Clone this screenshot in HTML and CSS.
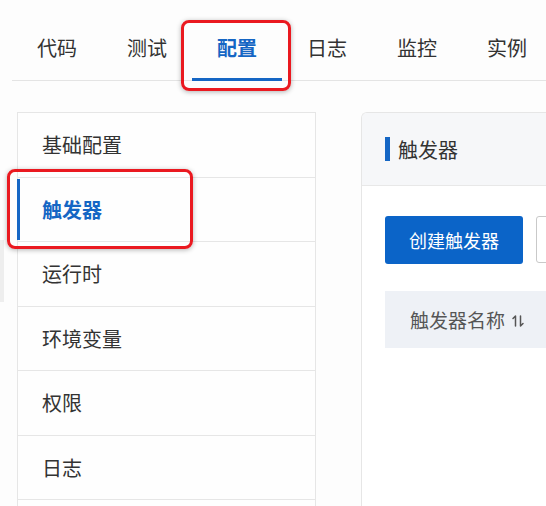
FILE: index.html
```html
<!DOCTYPE html>
<html lang="zh-CN">
<head>
<meta charset="utf-8">
<link rel="stylesheet" href="styles.css">
</head>
<body>
<div class="edge-tab"></div>
<nav class="tabs">
  <div class="tab">代码</div>
  <div class="tab">测试</div>
  <div class="tab active">配置<span class="mark mark-tab"></span></div>
  <div class="tab">日志</div>
  <div class="tab">监控</div>
  <div class="tab">实例</div>
</nav>
<main class="main">
  <aside class="sidebar">
    <div class="item">基础配置</div>
    <div class="item active">触发器<span class="mark mark-item"></span></div>
    <div class="item">运行时</div>
    <div class="item">环境变量</div>
    <div class="item">权限</div>
    <div class="item">日志</div>
  </aside>
  <section class="panel">
    <header class="panel-head"><span class="bar"></span><span class="title">触发器</span></header>
    <div class="panel-body">
      <div class="actions">
        <button class="btn-primary">创建触发器</button>
        <div class="btn-outline"></div>
      </div>
      <div class="thead">
        <span>触发器名称</span>
        <svg class="sort" width="14" height="12" viewBox="0 0 14 12" fill="none" stroke="#555" stroke-width="1.5" stroke-linecap="round" stroke-linejoin="round">
          <path d="M4.5 11V1L2 3.5"/>
          <path d="M9.5 1v10l2.5-2.5"/>
        </svg>
      </div>
    </div>
  </section>
</main>
</body>
</html>
```
FILE: styles.css
```css
* { box-sizing: border-box; }
html, body { margin: 0; padding: 0; }
body {
  width: 546px;
  height: 506px;
  overflow: hidden;
  background: #fdfdfd;
  font-family: "Noto Sans CJK SC", "Noto Sans", sans-serif;
  color: #333;
  position: relative;
}
.edge-tab {
  position: absolute;
  left: 0;
  top: 240px;
  width: 4px;
  height: 62px;
  background: #eeeeee;
}
.tabs {
  display: flex;
  margin-left: 12px;
  height: 81px;
  border-bottom: 1px solid #e4e4e4;
}
.tab {
  position: relative;
  width: 90px;
  height: 81px;
  padding-top: 34px;
  padding-left: 25px;
  line-height: 28px;
  font-size: 20px;
  color: #333;
  flex-shrink: 0;
}
.tab:last-child { width: 84px; }
.tab.active {
  color: #1566c4;
  font-weight: 700;
  box-shadow: inset 0 -3px 0 #1566c4;
}
.mark {
  position: absolute;
  border: 3px solid #ea1920;
  border-radius: 8px;
  box-shadow: 0 1px 5px rgba(0, 0, 0, 0.3);
  pointer-events: none;
}
.mark-tab {
  left: -11px;
  right: -9px;
  top: 20px;
  bottom: -10px;
}
.main {
  display: flex;
  margin-top: 31px;
  height: 394px;
}
.sidebar {
  margin-left: 17px;
  width: 299px;
  flex-shrink: 0;
  border: 1px solid #e6e6e6;
  border-bottom: none;
  background: #fefefe;
}
.item {
  position: relative;
  height: 64.5px;
  padding-left: 24px;
  display: flex;
  align-items: center;
  font-size: 20px;
  color: #333;
  border-bottom: 1px solid #e6e6e6;
}
.item.active {
  color: #1566c4;
  font-weight: 700;
}
.item.active::before {
  content: "";
  position: absolute;
  left: -1px;
  top: 1px;
  bottom: 1px;
  width: 3px;
  background: #1566c4;
}
.mark-item {
  left: -11px;
  top: -9px;
  width: 186px;
  height: 80px;
}
.panel {
  margin-left: 45px;
  flex: 1;
  min-width: 0;
  overflow: hidden;
  border: 1px solid #e6e6e6;
  border-right: none;
  border-bottom: none;
  border-radius: 6px 0 0 0;
  background: #ffffff;
}
.panel-head {
  height: 73px;
  display: flex;
  align-items: center;
  padding-left: 23px;
  gap: 8px;
  background: #f6f7f9;
  border-bottom: 1px solid #e8e8e8;
}
.bar {
  width: 5px;
  height: 24px;
  background: #1566c4;
}
.title {
  font-size: 20px;
  color: #333;
}
.panel-body {
  padding: 30px 0 0 23px;
}
.actions {
  display: flex;
  gap: 13px;
}
.btn-primary {
  width: 138px;
  height: 48px;
  flex-shrink: 0;
  border: none;
  border-radius: 3px;
  background: #0b64c8;
  color: #fff;
  font-family: inherit;
  font-size: 18px;
  padding: 0;
}
.btn-outline {
  width: 80px;
  height: 47px;
  flex-shrink: 0;
  border: 1px solid #c9c9c9;
  border-radius: 3px;
  background: #fff;
}
.thead {
  margin-top: 27px;
  height: 57px;
  background: #eef1f6;
  display: flex;
  align-items: center;
  padding-left: 25px;
  gap: 6px;
  font-size: 19px;
  color: #555;
  white-space: nowrap;
}
.sort { margin-top: 2px; flex-shrink: 0; }
```
